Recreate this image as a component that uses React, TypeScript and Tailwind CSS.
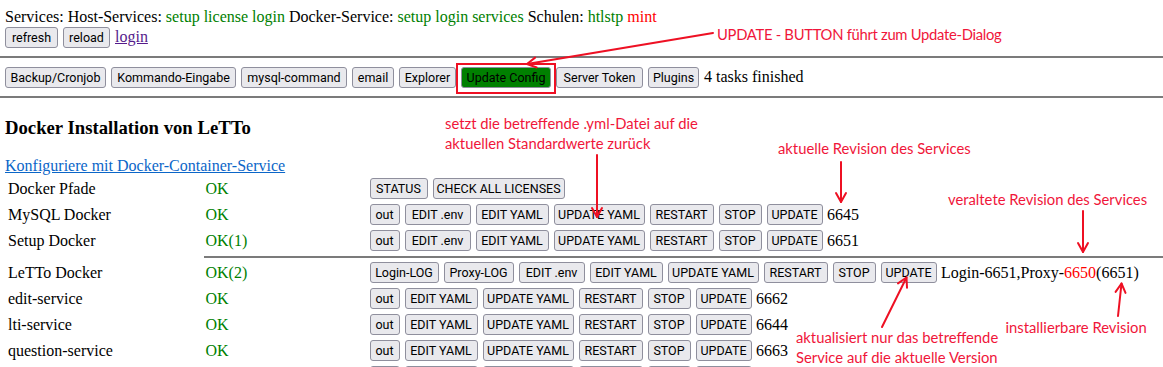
import React from "react";

const W: Record<string, string> = {
  refresh: "w-[53px]",
  reload: "w-[47px]",
  "Backup/Cronjob": "w-[101px]",
  "Kommando-Eingabe": "w-[125px]",
  "mysql-command": "w-[106px]",
  email: "w-[42px]",
  Explorer: "w-[57px]",
  "Update Config": "w-[90px]",
  "Server Token": "w-[87px]",
  Plugins: "w-[51px]",
  STATUS: "w-[58px]",
  "CHECK ALL LICENSES": "w-[132px]",
  out: "w-[30px]",
  "EDIT .env": "w-[66px]",
  "EDIT YAML": "w-[73px]",
  "UPDATE YAML": "w-[91px]",
  RESTART: "w-[64px]",
  STOP: "w-[43px]",
  UPDATE: "w-[56px]",
  "Login-LOG": "w-[69px]",
  "Proxy-LOG": "w-[70px]",
};

function Btn({ label, green, blank }: { label: string; green?: boolean; blank?: boolean }) {
  return (
    <button
      className={
        "h-[21px] shrink-0 rounded-[3px] border border-[#8f8f9d] text-black text-[12.5px] leading-[15px] flex items-center justify-center whitespace-nowrap font-['Roboto',sans-serif] " +
        (green ? "bg-[#008000] " : "bg-[#e9e9ed] ") +
        (W[label] ?? "")
      }
    >
      {blank ? null : label}
    </button>
  );
}

const fullBtns = ["out", "EDIT .env", "EDIT YAML", "UPDATE YAML", "RESTART", "STOP", "UPDATE"];
const svcBtns = ["out", "EDIT YAML", "UPDATE YAML", "RESTART", "STOP", "UPDATE"];
const lettoBtns = ["Login-LOG", "Proxy-LOG", "EDIT .env", "EDIT YAML", "UPDATE YAML", "RESTART", "STOP", "UPDATE"];

type Row = { name: string; ok: string; btns: string[]; rev: React.ReactNode };

const rowsA: Row[] = [
  { name: "Docker Pfade", ok: "OK", btns: ["STATUS", "CHECK ALL LICENSES"], rev: null },
  { name: "MySQL Docker", ok: "OK", btns: fullBtns, rev: "6645" },
  { name: "Setup Docker", ok: "OK(1)", btns: fullBtns, rev: "6651" },
];

const rowsB: Row[] = [
  {
    name: "LeTTo Docker",
    ok: "OK(2)",
    btns: lettoBtns,
    rev: (
      <>
        Login-6651,Proxy-<span className="text-[#ff0000]">6650</span>(6651)
      </>
    ),
  },
  { name: "edit-service", ok: "OK", btns: svcBtns, rev: "6662" },
  { name: "lti-service", ok: "OK", btns: svcBtns, rev: "6644" },
  { name: "question-service", ok: "OK", btns: svcBtns, rev: "6663" },
];

function TRow({ r }: { r: Row }) {
  return (
    <div className="flex items-center h-[26px] pl-[8px] leading-[18px] whitespace-nowrap">
      <div className="w-[197.5px] shrink-0">{r.name}</div>
      <div className="w-[164px] shrink-0 text-[#008000]">{r.ok}</div>
      <div className="flex items-center gap-[5px]">
        {r.btns.map((b, i) => (
          <Btn key={i} label={b} />
        ))}
        {r.rev !== null && <span className="ml-[-0.5px]">{r.rev}</span>}
      </div>
    </div>
  );
}

const ann = "absolute whitespace-nowrap text-[#f0163a] font-['Lato',sans-serif] text-[14.8px] leading-[20px]";

export default function App() {
  return (
    <div className="relative w-[1163px] h-[367px] overflow-hidden bg-white text-black font-['Liberation_Serif',serif] text-[16px]">
      <div className="pt-[8px]">
        <div className="pl-[5px] leading-[18px] whitespace-nowrap">
          Services: Host-Services: <span className="text-[#008000]">setup license login</span> Docker-Service:{" "}
          <span className="text-[#008000]">setup login services</span> Schulen:{" "}
          <span className="text-[#008000]">htlstp</span> <span className="text-[#ff0000]">mint</span>
        </div>
        <div className="flex items-center h-[22px] pl-[5px] gap-[5px] leading-[18px]">
          <Btn label="refresh" />
          <Btn label="reload" />
          <a className="text-[#551a8b] underline">login</a>
        </div>
        <div className="mt-[8px] h-[2px] bg-[#7b7b7b]" />
        <div className="mt-[8px] flex items-center h-[22px] pl-[5px] gap-[5px] leading-[18px] whitespace-nowrap">
          <Btn label="Backup/Cronjob" />
          <Btn label="Kommando-Eingabe" />
          <Btn label="mysql-command" />
          <Btn label="email" />
          <Btn label="Explorer" />
          <Btn label="Update Config" green />
          <Btn label="Server Token" />
          <Btn label="Plugins" />
          <span>4 tasks finished</span>
        </div>
        <div className="mt-[8px] h-[2px] bg-[#7b7b7b]" />
        <h3 className="mt-[18.72px] pl-[5px] text-[18.72px] leading-[21.5px] font-bold">Docker Installation von LeTTo</h3>
        <div className="mt-[18.72px] pl-[5px] leading-[18px]">
          <a className="text-[#0b66c8] underline">Konfiguriere mit Docker-Container-Service</a>
        </div>
        <div className="mt-[1px]">
          {rowsA.map((r, i) => (
            <TRow key={i} r={r} />
          ))}
          <div className="h-[6px] pt-[2px] pl-[204px]">
            <div className="h-[2px] bg-[#7b7b7b]" />
          </div>
          {rowsB.map((r, i) => (
            <TRow key={i} r={r} />
          ))}
          {/* next row, only the top edge of its buttons is in view */}
          <div className="flex items-start h-[26px] pt-[2.5px] pl-[369.5px] gap-[5px]">
            {svcBtns.map((b, i) => (
              <Btn key={i} label={b} blank />
            ))}
          </div>
        </div>
      </div>

      {/* annotations overlay */}
      <div className="absolute left-[456px] top-[63px] w-[100px] h-[30.5px] border-[2.5px] border-[#ee1023]" />
      <div className={ann + " left-[717px] top-[23.5px] text-[14.1px] tracking-[-0.3px]"}>UPDATE - BUTTON führt zum Update-Dialog</div>
      <div className={ann + " left-[445px] top-[112.5px]"}>
        setzt die betreffende .yml-Datei auf die
        <br />
        aktuellen Standardwerte zurück
      </div>
      <div className={ann + " left-[778px] top-[137.5px]"}>aktuelle Revision des Services</div>
      <div className={ann + " left-[948px] top-[188.5px]"}>veraltete Revision des Services</div>
      <div className={ann + " left-[1005.5px] top-[317px]"}>installierbare Revision</div>
      <div className={ann + " left-[796px] top-[326.5px] leading-[19px]"}>
        aktualisiert nur das betreffende
        <br />
        Service auf die aktuelle Version
      </div>
      <svg className="absolute inset-0 pointer-events-none" width="1163" height="367" viewBox="0 0 1163 367" fill="none" stroke="#ee1023" strokeWidth="2" strokeLinecap="round" strokeLinejoin="round">
        <line x1="713" y1="33" x2="527" y2="64" />
        <polyline points="536.7,67.5 527,64 535.1,57.6" />
        <line x1="597" y1="155" x2="597" y2="217" />
        <polyline points="592,208 597,217 602,208" />
        <line x1="841" y1="162" x2="841" y2="202" />
        <polyline points="836,193 841,202 846,193" />
        <line x1="1083" y1="211" x2="1083" y2="252" />
        <polyline points="1078,243 1083,252 1088,243" />
        <line x1="1118" y1="316" x2="1121.5" y2="283.5" />
        <polyline points="1125.5,292.9 1121.5,283.5 1115.6,291.9" />
        <line x1="882" y1="327" x2="906.5" y2="277.5" />
        <polyline points="907,287.8 906.5,277.5 898,283.4" />
      </svg>
    </div>
  );
}
